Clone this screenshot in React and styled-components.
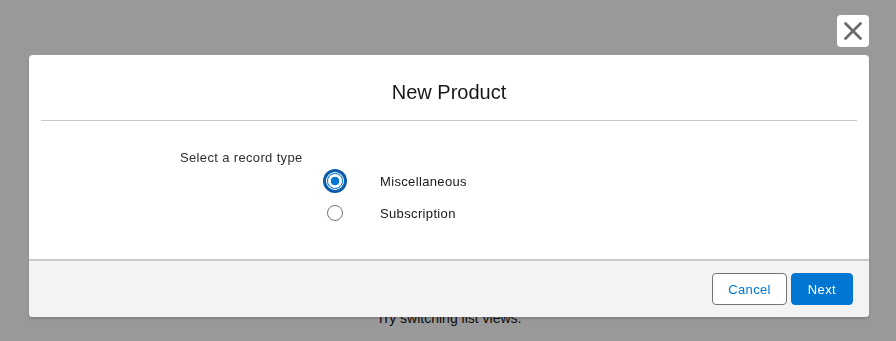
import React from "react";
import styled, { createGlobalStyle } from "styled-components";

const GlobalStyle = createGlobalStyle`
  html, body {
    margin: 0;
    padding: 0;
    background: #ffffff;
    font-family: "Liberation Sans", Arial, sans-serif;
  }
  * { box-sizing: border-box; }
`;

const Page = styled.main`
  min-height: 341px;
  padding-top: 308px;
  display: flex;
  justify-content: center;
`;

const PageMessage = styled.p`
  margin: 0;
  font-size: 14px;
  line-height: 20px;
  color: #181818;
  padding-left: 2px;
`;

const Backdrop = styled.div`
  position: fixed;
  inset: 0;
  background: rgba(0, 0, 0, 0.4);
`;

const ModalContainer = styled.section`
  position: fixed;
  inset: 0;
  display: flex;
  flex-direction: column;
  align-items: flex-start;
  padding: 15px 0 0 29px;
`;

const ModalColumn = styled.div`
  width: 840px;
  display: flex;
  flex-direction: column;
`;

const CloseButton = styled.button`
  align-self: flex-end;
  width: 32px;
  height: 32px;
  padding: 0;
  border: none;
  border-radius: 4px;
  background: #ffffff;
  display: flex;
  align-items: center;
  justify-content: center;
  margin-bottom: 8px;
  cursor: pointer;
`;

const Modal = styled.div`
  background: #ffffff;
  border-radius: 4px;
  box-shadow: 0 2px 3px rgba(0, 0, 0, 0.16);
  overflow: hidden;
`;

const Header = styled.header`
  margin: 0 12px;
  padding: 25px 0 15px;
  border-bottom: 1px solid #c9c9c9;
  text-align: center;
`;

const Title = styled.h2`
  margin: 0;
  font-size: 20px;
  line-height: 25px;
  font-weight: 400;
  color: #181818;
`;

const Body = styled.div`
  padding: 30px 0 30px;
`;

const Fieldset = styled.fieldset`
  margin: 0;
  padding: 0;
  border: none;
`;

const Legend = styled.legend`
  padding: 0 0 0 151px;
  font-size: 13px;
  line-height: 14px;
  letter-spacing: 0.35px;
  color: #2e2e2e;
`;

const RadioGroup = styled.div`
  display: flex;
  flex-direction: column;
  padding-left: 298px;
`;

const RadioRow = styled.label`
  display: flex;
  align-items: center;
  height: 32px;
  cursor: pointer;
`;

const RadioInput = styled.input`
  appearance: none;
  -webkit-appearance: none;
  margin: 0;
  width: 16px;
  height: 16px;
  border-radius: 50%;
  border: 1px solid ${(p) => (p.checked ? "#0176d3" : "#747474")};
  background: ${(p) =>
    p.checked
      ? "radial-gradient(circle, #0176d3 0 4px, #ffffff 4.6px)"
      : "#ffffff"};
  box-shadow: ${(p) =>
    p.$focused ? "0 0 0 1px #ffffff, 0 0 0 4px #0b5cab" : "none"};
  outline: none;
`;

const RadioLabel = styled.span`
  margin-left: 37px;
  font-size: 13px;
  letter-spacing: 0.35px;
  color: #181818;
`;

const Footer = styled.footer`
  background: #f3f3f3;
  border-top: 2px solid #c9c9c9;
  padding: 12px 16px 12px;
  display: flex;
  justify-content: flex-end;
  gap: 4px;
`;

const Button = styled.button`
  height: 32px;
  padding: 0 ${(p) => (p.$variant === "brand" ? "16px" : "15px")};
  border-radius: 4px;
  font-family: "Liberation Sans", Arial, sans-serif;
  font-size: 13px;
  letter-spacing: 0.35px;
  border: 1px solid ${(p) => (p.$variant === "brand" ? "#0176d3" : "#747474")};
  background: ${(p) => (p.$variant === "brand" ? "#0176d3" : "#ffffff")};
  color: ${(p) => (p.$variant === "brand" ? "#ffffff" : "#0176d3")};
  cursor: pointer;
`;

const options = [
  { id: "misc", label: "Miscellaneous" },
  { id: "sub", label: "Subscription" },
];

export default function App() {
  const [value, setValue] = React.useState("misc");
  return (
    <>
      <GlobalStyle />
      <Page>
        <PageMessage>Try switching list views.</PageMessage>
      </Page>
      <Backdrop />
      <ModalContainer role="dialog" aria-modal="true" aria-label="New Product">
        <ModalColumn>
          <CloseButton aria-label="Close">
            <svg width="32" height="32" viewBox="0 0 32 32">
              <path
                d="M8.5 8.5 L23.5 23.5 M23.5 8.5 L8.5 23.5"
                stroke="#6b6b6b"
                strokeWidth="2.8"
                strokeLinecap="round"
                fill="none"
              />
            </svg>
          </CloseButton>
          <Modal>
            <Header>
              <Title>New Product</Title>
            </Header>
            <Body>
              <Fieldset>
                <Legend>Select a record type</Legend>
                <RadioGroup>
                  {options.map((o) => (
                    <RadioRow key={o.id}>
                      <RadioInput
                        type="radio"
                        name="recordType"
                        checked={value === o.id}
                        $focused={value === o.id}
                        onChange={() => setValue(o.id)}
                      />
                      <RadioLabel>{o.label}</RadioLabel>
                    </RadioRow>
                  ))}
                </RadioGroup>
              </Fieldset>
            </Body>
            <Footer>
              <Button>Cancel</Button>
              <Button $variant="brand">Next</Button>
            </Footer>
          </Modal>
        </ModalColumn>
      </ModalContainer>
    </>
  );
}
